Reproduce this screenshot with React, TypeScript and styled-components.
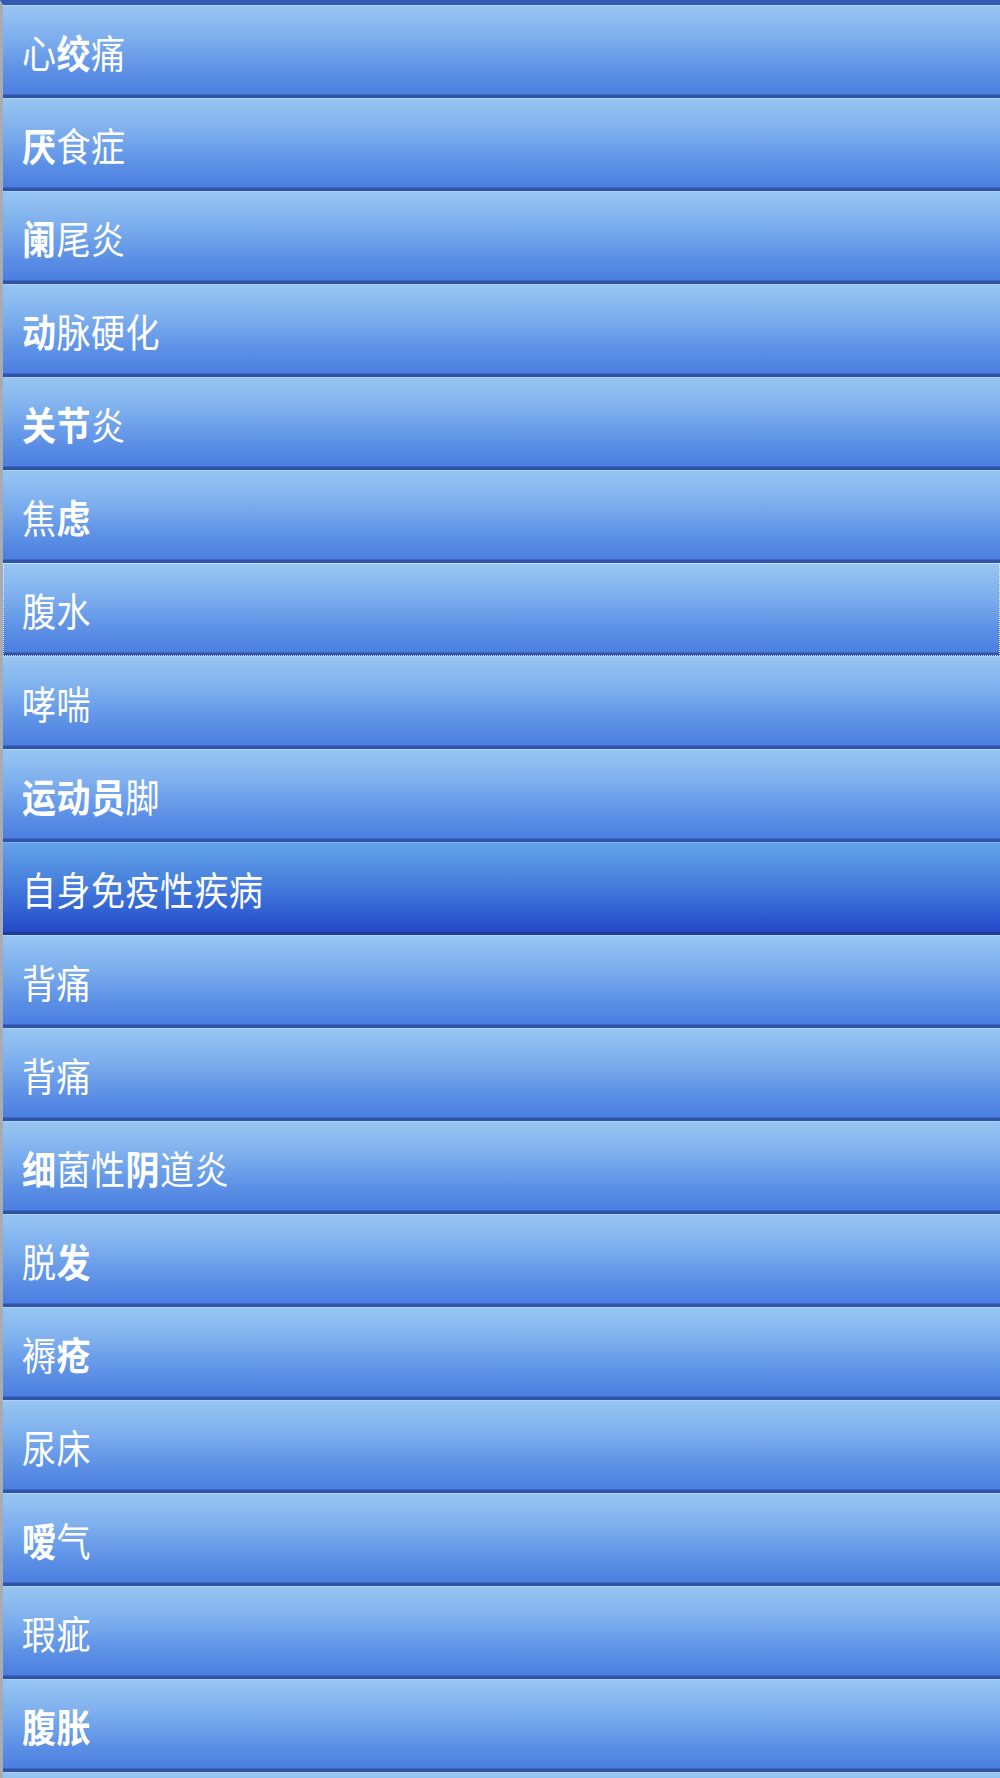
import React from "react";
import styled, { createGlobalStyle, css } from "styled-components";

const Global = createGlobalStyle`
  html, body {
    margin: 0;
    padding: 0;
    background: #4b7fe0;
  }
  body {
    font-family: "Noto Sans CJK SC", "Noto Sans", sans-serif;
  }
`;

const List = styled.ul`
  list-style: none;
  margin: 0;
  padding: 0;
  border-top: 5px solid #3359b2;
  border-left: 3px solid #a9abb0;
  overflow: hidden;
`;

const Row = styled.li<{ $active?: boolean; $focused?: boolean }>`
  box-sizing: border-box;
  height: 93px;
  display: flex;
  align-items: center;
  padding: 4px 0 0 19px;
  border-bottom: 3px solid #2f53a6;
  box-shadow: inset 0 1px 0 #a9d2f6, inset 0 -1px 0 #3d67c4;
  background: linear-gradient(to bottom, #98c6f2 0%, #7fb0ee 35%, #5f93e6 70%, #4a7ee0 100%);
  color: #ffffff;
  ${(p) =>
    p.$active &&
    css`
      background: linear-gradient(to bottom, #64a2ea 0%, #4a84de 40%, #3262d4 75%, #2447c9 100%);
      border-bottom-color: #1e3b95;
      box-shadow: inset 0 1px 0 #7ab4ee, inset 0 -1px 0 #2a49b4;
    `}
  ${(p) =>
    p.$focused &&
    css`
      outline: 1px dotted rgba(255, 255, 255, 0.85);
      outline-offset: -1px;
    `}
`;

const Label = styled.span`
  display: inline-block;
  font-size: 34px;
  line-height: 40px;
  letter-spacing: 0.5px;
  font-weight: 400;
  transform: scaleY(1.12);
  transform-origin: left center;
  white-space: nowrap;

  b {
    font-weight: 700;
  }
`;

const items = [
  "心[绞]痛",
  "[厌]食症",
  "[阑]尾炎",
  "[动]脉硬化",
  "[关节]炎",
  "焦[虑]",
  "腹水",
  "哮喘",
  "[运动员]脚",
  "自身免疫性疾病",
  "背痛",
  "背痛",
  "[细]菌性[阴]道炎",
  "脱[发]",
  "褥[疮]",
  "尿床",
  "[嗳]气",
  "瑕疵",
  "[腹胀]",
  "",
];

function renderLabel(text: string) {
  const parts: React.ReactNode[] = [];
  const re = /\[([^\]]+)\]|([^\[]+)/g;
  let m: RegExpExecArray | null;
  let k = 0;
  while ((m = re.exec(text))) {
    if (m[1]) parts.push(<b key={k++}>{m[1]}</b>);
    else parts.push(<React.Fragment key={k++}>{m[2]}</React.Fragment>);
  }
  return parts;
}

export default function App() {
  return (
    <>
      <Global />
      <List>
        {items.map((t, i) => (
          <Row key={i} $active={i === 9} $focused={i === 6}>
            {t && <Label>{renderLabel(t)}</Label>}
          </Row>
        ))}
      </List>
    </>
  );
}
